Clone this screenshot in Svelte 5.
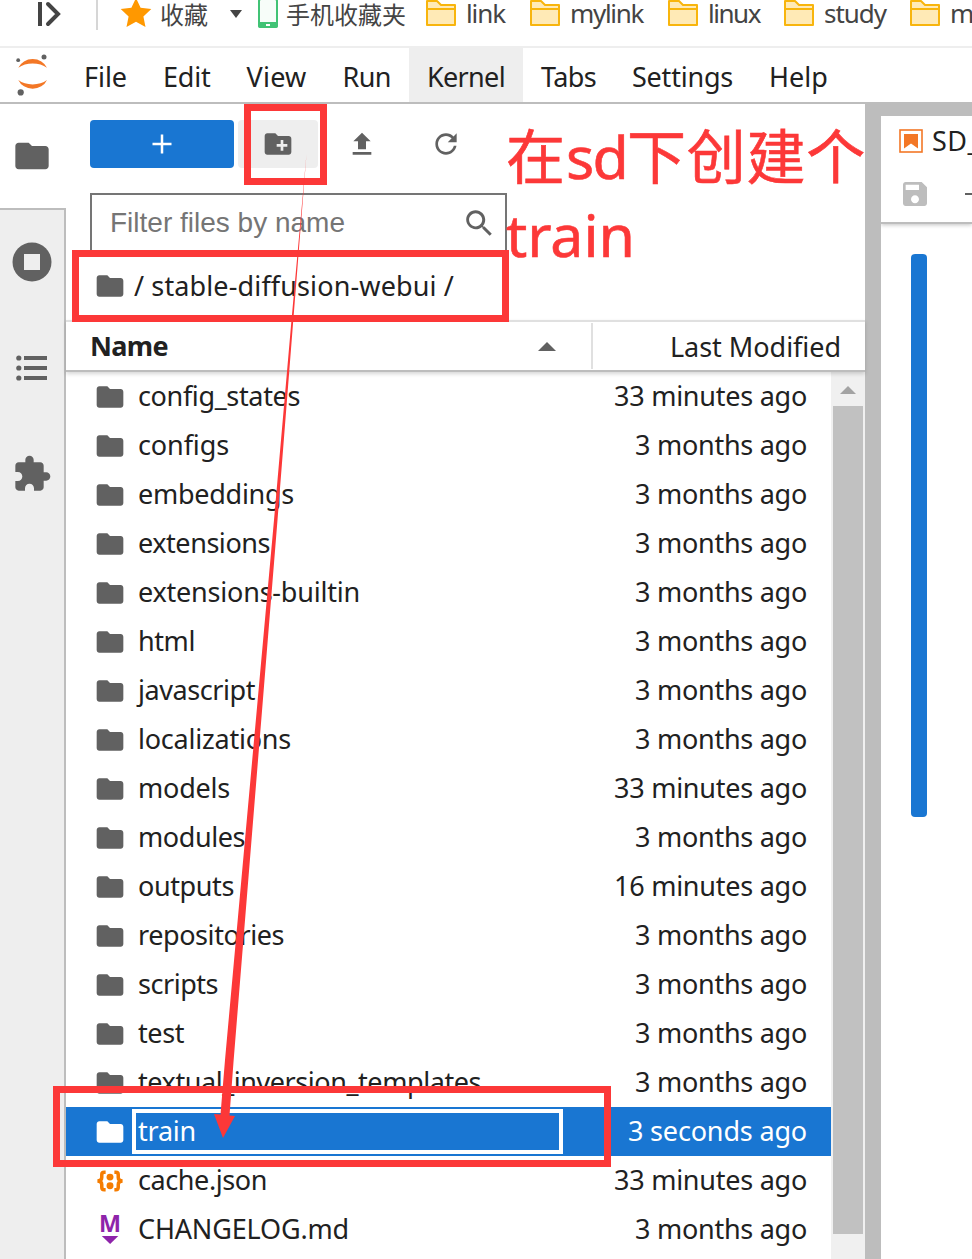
<script lang="ts">
  type Entry = { name: string; modified: string; width: number; kind?: 'folder' | 'json' | 'markdown' };

  const MONTHS = '3 months ago';
  const MINUTES = '33 minutes ago';

  const modifiedWidths: Record<string, number> = {
    [MONTHS]: 172,
    [MINUTES]: 193,
    '16 minutes ago': 193,
    '3 seconds ago': 179
  };

  const bookmarks = [
    { label: 'link', width: 39, slot: 104 },
    { label: 'mylink', width: 73, slot: 138 },
    { label: 'linux', width: 52, slot: 116 },
    { label: 'study', width: 62, slot: 126 },
    { label: 'mac', width: 50, slot: 120 }
  ];

  const menus = [
    { label: 'File', width: 43 },
    { label: 'Edit', width: 47.5 },
    { label: 'View', width: 60 },
    { label: 'Run', width: 48.5 },
    { label: 'Kernel', width: 78 },
    { label: 'Tabs', width: 55 },
    { label: 'Settings', width: 101 },
    { label: 'Help', width: 59 }
  ];

  const entries: Entry[] = [
    { name: 'config_states', modified: MINUTES, width: 162 },
    { name: 'configs', modified: MONTHS, width: 91 },
    { name: 'embeddings', modified: MONTHS, width: 156 },
    { name: 'extensions', modified: MONTHS, width: 132 },
    { name: 'extensions-builtin', modified: MONTHS, width: 222 },
    { name: 'html', modified: MONTHS, width: 57 },
    { name: 'javascript', modified: MONTHS, width: 117 },
    { name: 'localizations', modified: MONTHS, width: 153 },
    { name: 'models', modified: MINUTES, width: 92 },
    { name: 'modules', modified: MONTHS, width: 107 },
    { name: 'outputs', modified: '16 minutes ago', width: 96 },
    { name: 'repositories', modified: MONTHS, width: 146 },
    { name: 'scripts', modified: MONTHS, width: 80 },
    { name: 'test', modified: MONTHS, width: 46 },
    { name: 'textual_inversion_templates', modified: MONTHS, width: 343 },
    { name: 'train', modified: '3 seconds ago', width: 58 },
    { name: 'cache.json', modified: MINUTES, width: 129, kind: 'json' },
    { name: 'CHANGELOG.md', modified: MONTHS, width: 211, kind: 'markdown' }
  ];

  let activeMenu = $state('Kernel');
  let selected = $state('train');

  // Spreads the letters so that the label takes up exactly `width` pixels
  function fit(node: HTMLElement, width: number) {
    const natural = node.getBoundingClientRect().width;
    node.style.letterSpacing = `${(width - natural) / (node.textContent ?? '').length}px`;
  }
</script>

{#snippet folder(size: number)}
  <svg class="icon" width={size} height={size} viewBox="0 0 24 24">
    <path d="M10 4H4c-1.1 0-1.99.9-1.99 2L2 18c0 1.1.9 2 2 2h16c1.1 0 2-.9 2-2V8c0-1.1-.9-2-2-2h-8l-2-2z" />
  </svg>
{/snippet}

<div class="app">
  <div class="bookmarks">
    <svg class="expand" width="26" height="28" viewBox="0 0 26 28">
      <path d="M4 2v24" />
      <path d="M12 4l10 10-10 10" stroke-linecap="round" />
    </svg>
    <span class="rule"></span>
    <svg class="star" width="32" height="32" viewBox="0 0 32 32">
      <path d="M16 1l4.6 9.8 10.7 1.3-7.9 7.3 2.1 10.6L16 24.8 6.500 30l2.100-10.600-7.900-7.300 10.700-1.300z" />
    </svg>
    <span class="mark cn fav"><span use:fit={48}>收藏</span></span>
    <span class="caret"></span>
    <svg class="phone" width="20" height="30" viewBox="0 0 20 30">
      <rect x="1" y="1" width="18" height="28" rx="2" fill="#f7fdf9" stroke="#41c375" stroke-width="2" />
      <path d="M0 24h20v4q0 2-2 2H2q-2 0-2-2z" fill="#41c375" />
      <rect x="8" y="26" width="4" height="2" fill="#fff" />
    </svg>
    <span class="mark cn mobile"><span use:fit={120}>手机收藏夹</span></span>
    {#each bookmarks as bookmark}
      <div class="bookmark" style:width="{bookmark.slot}px">
        <svg width="30" height="28" viewBox="0 0 30 28">
          <path d="M1 26V2h10l4 4h14v20z" fill="#ffeab6" stroke="#f8b50d" stroke-width="2" stroke-linejoin="round" />
          <path d="M2 10h26" stroke="#f8b50d" stroke-width="2" />
        </svg>
        <span class="mark"><span use:fit={bookmark.width}>{bookmark.label}</span></span>
      </div>
    {/each}
  </div>

  <nav class="menubar">
    <svg class="logo" width="36" height="44" viewBox="0 0 36 44">
      <path d="M4.300 14.800a15.500 14 0 0 1 28.700 0 20 14.500 0 0 0-28.700 0z" fill="#f37726" />
      <path d="M4.300 27a15.500 14 0 0 0 28.700 0 20 14.500 0 0 1-28.700 0z" fill="#f37726" />
      <circle cx="30" cy="4" r="2.500" />
      <circle cx="4.200" cy="7.200" r="1.900" />
      <circle cx="6.700" cy="39.400" r="3.100" />
    </svg>
    {#each menus as menu}
      <button class:active={activeMenu === menu.label} onclick={() => (activeMenu = menu.label)}>
        <span use:fit={menu.width}>{menu.label}</span>
      </button>
    {/each}
  </nav>

  <main>
    <aside>
      <div class="tab current">{@render folder(40)}</div>
      <div class="tabs">
        <div class="tab">
          <svg width="40" height="40" viewBox="0 0 40 40">
            <circle cx="20" cy="20" r="19.500" />
            <rect x="12" y="12" width="16" height="16" fill="#eee" />
          </svg>
        </div>
        <div class="tab">
          <svg width="32" height="26" viewBox="0 0 32 26">
            <circle cx="2.800" cy="3" r="2.600" /><circle cx="2.800" cy="13" r="2.600" /><circle cx="2.800" cy="23" r="2.600" />
            <path d="M8 1h23v4H8zM8 11h23v4H8zM8 21h23v4H8z" />
          </svg>
        </div>
        <div class="tab">
          <svg width="40" height="40" viewBox="0 0 24 24">
            <path d="M20.500 11H19V7c0-1.100-.9-2-2-2h-4V3.500C13 2.120 11.880 1 10.500 1S8 2.120 8 3.500V5H4c-1.100 0-1.990.9-1.990 2v3.800H3.500c1.490 0 2.700 1.210 2.700 2.700s-1.210 2.700-2.700 2.700H2V20c0 1.100.9 2 2 2h3.800v-1.500c0-1.490 1.210-2.700 2.700-2.700s2.700 1.210 2.700 2.700V22H17c1.100 0 2-.9 2-2v-4h1.500c1.380 0 2.500-1.120 2.500-2.500S21.880 11 20.500 11z" />
          </svg>
        </div>
      </div>
    </aside>

    <section class="browser">
      <div class="toolbar">
        <button class="launch" aria-label="New launcher">
          <svg width="20" height="20" viewBox="0 0 20 20"><path d="M10 .5v19M.5 10h19" stroke="#fff" stroke-width="2.500" /></svg>
        </button>
        <button class="tool hover" aria-label="New folder">
          <svg width="32" height="32" viewBox="0 0 24 24">
            <path d="M20 6h-8l-2-2H4c-1.110 0-1.990.89-1.990 2L2 18c0 1.110.89 2 2 2h16c1.110 0 2-.89 2-2V8c0-1.110-.89-2-2-2zm-1 8h-3v3h-2v-3h-3v-2h3V9h2v3h3v2z" />
          </svg>
        </button>
        <button class="tool" aria-label="Upload">
          <svg width="32" height="32" viewBox="0 0 24 24"><path d="M5 20h14v-2H5zM5.500 10h3.500v6h6v-6h3.500L12 3.500z" /></svg>
        </button>
        <button class="tool" aria-label="Refresh">
          <svg width="32" height="32" viewBox="0 0 18 18">
            <path d="M9 13.500c-2.490 0-4.500-2.010-4.500-4.500S6.510 4.500 9 4.500c1.240 0 2.360.52 3.170 1.330L10 8h5V3l-1.760 1.760C12.150 3.680 10.660 3 9 3 5.690 3 3.010 5.690 3.010 9S5.690 15 9 15c2.970 0 5.430-2.160 5.900-5h-1.520c-.46 2-2.240 3.500-4.380 3.500z" />
          </svg>
        </button>
      </div>

      <div class="filter">
        <span use:fit={235}>Filter files by name</span>
        <svg width="32" height="32" viewBox="0 0 18 18">
          <path d="M12.100 10.900h-.7l-.2-.2c.8-.9 1.300-2.200 1.300-3.500 0-3-2.400-5.400-5.400-5.400S1.800 4.200 1.800 7.100s2.400 5.400 5.400 5.400c1.300 0 2.500-.5 3.500-1.300l.2.2v.7l4.100 4.100 1.200-1.200zM7.100 10.900c-2.100 0-3.700-1.700-3.700-3.700s1.700-3.700 3.700-3.700 3.700 1.700 3.700 3.700-1.600 3.700-3.700 3.700z" />
        </svg>
      </div>

      <div class="crumbs">
        {@render folder(32)}
        <span use:fit={320}>/ stable-diffusion-webui /</span>
      </div>

      <div class="columns">
        <div class="name"><span use:fit={78}>Name</span><i></i></div>
        <div class="modified"><span use:fit={171}>Last Modified</span></div>
      </div>

      <div class="listing">
        <ul>
          {#each entries as entry}
            <!-- svelte-ignore a11y_click_events_have_key_events, a11y_no_noninteractive_element_interactions -->
            <li class:selected={selected === entry.name} onclick={() => (selected = entry.name)}>
              {#if entry.kind === 'json'}
                <svg class="icon" width="32" height="32" viewBox="0 0 33 33">
                  <g fill="none" stroke="#f57c00" stroke-width="3.600">
                    <path d="M12 7.500H10.500q-2.500 0-2.500 2.500v3q0 3.500-4.500 3.500 4.500 0 4.500 3.500v3q0 2.500 2.500 2.500h1.500" />
                    <path d="M21 7.500h1.500q2.500 0 2.500 2.500v3q0 3.500 4.500 3.500-4.500 0-4.500 3.500v3q0 2.500-2.500 2.500h-1.500" />
                  </g>
                  <circle cx="16.500" cy="12.500" r="3.600" fill="#f57c00" /><circle cx="16.500" cy="21.500" r="3.600" fill="#f57c00" />
                </svg>
              {:else if entry.kind === 'markdown'}
                <svg class="icon" width="32" height="32" viewBox="0 0 32 32">
                  <text class="md" x="16" y="18" text-anchor="middle" textLength="22" lengthAdjust="spacingAndGlyphs" fill="#8e24aa">M</text>
                  <path d="M7.800 22h16.500l-8.200 8z" fill="#8e24aa" />
                </svg>
              {:else}
                {@render folder(32)}
              {/if}
              <div class="label"><span use:fit={entry.width}>{entry.name}</span></div>
              <span class="when"><span use:fit={modifiedWidths[entry.modified]}>{entry.modified}</span></span>
            </li>
          {/each}
        </ul>
        <div class="scrollbar"><i></i><b></b></div>
      </div>
    </section>

    <section class="document">
      <div class="doc-head">
        <div class="doc-tab">
          <svg width="24" height="24" viewBox="0 0 24 24">
            <rect x="1" y="1" width="22" height="22" fill="none" stroke="#f37726" stroke-width="1.600" />
            <path d="M5 5h14v14.500l-7-5-7 5z" fill="#f37726" />
          </svg>
          <span use:fit={48}>SD_</span>
        </div>
        <div class="doc-tools">
          <svg width="32" height="32" viewBox="0 0 24 24">
            <path fill="#bdbdbd" d="M17 3H5c-1.110 0-2 .9-2 2v14c0 1.100.89 2 2 2h14c1.100 0 2-.9 2-2V7l-4-4zm-5 16c-1.660 0-3-1.340-3-3s1.340-3 3-3 3 1.340 3 3-1.340 3-3 3zm3-10H5V5h10v4z" />
          </svg>
          <i></i>
        </div>
      </div>
      <div class="cell-bar"></div>
    </section>
  </main>

  <!-- Red tutorial marks drawn over the window -->
  <div class="notes">
    <div class="frame create"></div>
    <div class="frame path"></div>
    <div class="frame result"></div>
    <svg width="972" height="1259">
      <path d="M306.500 154L293.300 320 277.500 520 233.500 1062 229.500 1115.500l5.500.5L223 1138l-9-24 6.500.5L225 1060 274 520 291.500 320z" />
    </svg>
    <p>
      <span use:fit={60}>在</span><span use:fit={61}>sd</span><span use:fit={239}>下创建个</span><br />
      <span use:fit={129}>train</span>
    </p>
  </div>
</div>

<style>
  :global(body) {
    background: #fff;
  }

  .app {
    position: relative;
    width: 972px;
    height: 1259px;
    overflow: hidden;
    display: flex;
    flex-direction: column;
    font: 27px/48px 'Noto Sans', 'Open Sans', 'Noto Sans CJK SC', sans-serif;
    color: #212121;
  }

  .app * {
    box-sizing: border-box;
  }

  span {
    white-space: nowrap;
    flex-shrink: 0;
  }

  svg {
    display: block;
    flex-shrink: 0;
    fill: #616161;
  }

  button {
    border: 0;
    padding: 0;
    font: inherit;
    color: inherit;
    background: transparent;
  }

  .bookmarks {
    height: 48px;
    border-bottom: 2px solid #eee;
    display: flex;
    flex-shrink: 0;
    align-items: flex-start;
    padding-left: 36px;
    color: #444;
  }

  .expand {
    fill: none;
    stroke: #444;
    stroke-width: 4;
    margin-right: 34px;
  }

  .rule {
    width: 2px;
    height: 30px;
    margin-right: 22px;
    background: #d6d6d6;
  }

  .star {
    margin-top: -3px;
    fill: #ff9800;
  }

  .mark {
    font-size: 26px;
    line-height: 27px;
  }

  .cn {
    font-family: 'Noto Sans CJK SC', sans-serif;
    font-size: 24px;
  }

  .fav {
    width: 48px;
    margin-left: 8px;
  }

  .caret {
    margin: 10px 16px 0 22px;
    border: 6px solid transparent;
    border-top: 8px solid #444;
    border-bottom: 0;
  }

  .phone {
    margin-top: -2px;
  }

  .mobile {
    width: 120px;
    margin: 0 20px 0 8px;
  }

  .bookmark {
    display: flex;
    flex-shrink: 0;
    gap: 10px;
  }

  .bookmark svg {
    margin-top: -1px;
  }

  .menubar {
    height: 56px;
    border-bottom: 2px solid #bdbdbd;
    display: flex;
    flex-shrink: 0;
    align-items: stretch;
  }

  .logo {
    margin: 5px 16px 0 14px;
  }

  .menubar button {
    padding: 2px 18px 0;
    line-height: 54px;
  }

  .menubar button.active {
    background: #eee;
  }

  main {
    flex: 1;
    display: flex;
    min-height: 0;
  }

  aside {
    width: 66px;
    flex-shrink: 0;
    display: flex;
    flex-direction: column;
  }

  .tabs {
    flex: 1;
    background: #eee;
    border-top: 2px solid #bdbdbd;
    border-right: 2px solid #bdbdbd;
  }

  .tab {
    width: 64px;
    height: 106px;
    padding-bottom: 2px;
    display: flex;
    align-items: center;
    justify-content: center;
  }

  .tab.current {
    height: 104px;
    padding: 0;
  }

  .browser {
    width: 799px;
    flex-shrink: 0;
    display: flex;
    flex-direction: column;
  }

  .toolbar {
    display: flex;
    gap: 4px;
    padding: 16px 24px 0;
    height: 89px;
  }

  .launch,
  .tool {
    width: 80px;
    height: 48px;
    border-radius: 4px;
    display: flex;
    align-items: center;
    justify-content: center;
  }

  .launch {
    width: 144px;
    background: #1976d2;
  }

  .tool.hover {
    background: #eee;
  }

  .filter {
    width: 417px;
    height: 60px;
    margin-left: 24px;
    padding: 0 10px 0 18px;
    border: 2px solid #757575;
    display: flex;
    align-items: center;
    justify-content: space-between;
    font-family: 'Liberation Sans', Arial, sans-serif;
    font-size: 28px;
    color: #757575;
  }

  .crumbs {
    height: 67px;
    padding: 0 0 2px 28px;
    display: flex;
    align-items: center;
    gap: 8px;
  }

  .columns {
    height: 52px;
    border-top: 2px solid #e0e0e0;
    border-bottom: 2px solid #bdbdbd;
    box-shadow: 0 2px 4px rgba(0, 0, 0, 0.16);
    display: flex;
    align-items: center;
    position: relative;
  }

  .name {
    width: 527px;
    height: 46px;
    padding: 0 35px 0 24px;
    border-right: 2px solid #e0e0e0;
    display: flex;
    align-items: center;
    justify-content: space-between;
    font-weight: 700;
  }

  .name i {
    border: 9px solid transparent;
    border-top: 0;
    border-bottom: 9px solid #616161;
  }

  .modified {
    flex: 1;
    padding: 2px 24px 0 0;
    text-align: right;
  }

  .listing {
    flex: 1;
    min-height: 0;
    overflow: hidden;
    display: flex;
  }

  ul {
    width: 765px;
    margin: 0;
    padding: 0;
    list-style: none;
  }

  li {
    height: 49px;
    padding: 0 24px 0 28px;
    display: flex;
    align-items: center;
  }

  .label {
    flex: 1;
    padding: 0 0 2px 12px;
  }

  .when {
    padding-bottom: 2px;
  }

  .selected {
    background: #1976d2;
    color: #fff;
  }

  .selected .icon {
    fill: #fff;
  }

  /* rename field of the selected row */
  .selected .label {
    flex: none;
    width: 431px;
    height: 45px;
    margin: 0 auto 0 6px;
    padding: 0 0 0 2px;
    border: 4px solid #fff;
    line-height: 36px;
  }

  .md {
    font: 700 23px 'Open Sans', sans-serif;
  }

  .scrollbar {
    width: 34px;
    background: #f0f0f0;
    display: flex;
    flex-direction: column;
    align-items: center;
  }

  .scrollbar i {
    margin: 14px 0 12px;
    border: 8px solid transparent;
    border-top: 0;
    border-bottom-color: #a3a3a3;
  }

  .scrollbar b {
    width: 30px;
    height: 828px;
    background: #c1c1c1;
  }

  .document {
    flex: 1;
    min-width: 0;
    overflow: hidden;
    border-left: 16px solid #bdbdbd;
    border-top: 12px solid #bdbdbd;
  }

  .doc-head {
    height: 108px;
    border-bottom: 2px solid #bdbdbd;
    box-shadow: 0 1px 4px rgba(0, 0, 0, 0.24);
  }

  .doc-tab {
    height: 50px;
    padding-left: 18px;
    display: flex;
    align-items: center;
    gap: 9px;
  }

  .doc-tab span {
    padding-bottom: 1px;
  }

  .doc-tools {
    height: 56px;
    padding-left: 18px;
    display: flex;
    align-items: center;
    gap: 34px;
  }

  .doc-tools i {
    width: 20px;
    height: 2px;
    flex-shrink: 0;
    background: #616161;
  }

  .cell-bar {
    width: 16px;
    height: 563px;
    margin: 30px 0 0 30px;
    border-radius: 4px;
    background: #1976d2;
  }

  .notes {
    position: absolute;
    inset: 0;
    pointer-events: none;
    color: #fc3838;
  }

  .notes svg {
    position: absolute;
    inset: 0;
    fill: #fc3838;
  }

  .frame {
    position: absolute;
    border: 7px solid #fc3838;
  }

  .create {
    left: 244px;
    top: 104px;
    width: 83px;
    height: 81px;
  }

  .path {
    left: 72px;
    top: 250px;
    width: 437px;
    height: 72px;
  }

  .result {
    left: 53px;
    top: 1086px;
    width: 558px;
    height: 81px;
  }

  .notes p {
    position: absolute;
    left: 506px;
    top: 117px;
    margin: 0;
    font-size: 59px;
    line-height: 78px;
    -webkit-text-stroke: 0.6px #fc3838;
  }
</style>
